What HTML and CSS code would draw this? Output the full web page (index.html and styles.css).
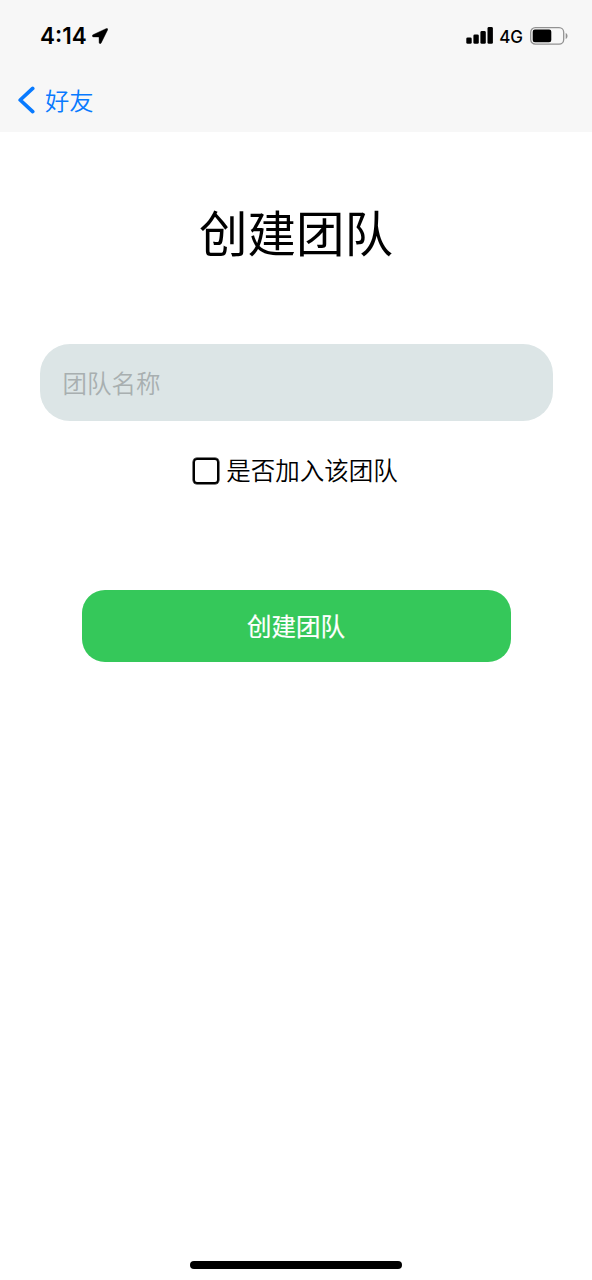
FILE: index.html
```html
<!DOCTYPE html>
<html lang="zh-CN">
<head>
<meta charset="utf-8">
<title>创建团队</title>
<link rel="stylesheet" href="styles.css">
</head>
<body>
<div class="screen">
  <header class="top">
    <div class="status">
      <div class="status-left">
        <span class="time">4:14</span>
        <svg class="location" width="16" height="16" viewBox="0 0 16 16"><path d="M14.4.5 1 6.7c-1.2.6-.8 2.2.4 2.2l5.6.1.1 5.5c0 1.3 1.6 1.6 2.1.4L15.7 1.7c.4-.8-.5-1.6-1.3-1.2z" stroke="#000" stroke-width=".4"/></svg>
      </div>
      <div class="status-right">
        <svg class="signal" width="27" height="17" viewBox="0 0 27 17"><rect x="0.3" y="10.4" width="5.4" height="6.4" rx="1.4"/><rect x="7.4" y="7.4" width="5.4" height="9.4" rx="1.4"/><rect x="14.4" y="4" width="5.4" height="12.8" rx="1.4"/><rect x="21.5" y="0.1" width="5.4" height="16.7" rx="1.4"/></svg>
        <span class="network">4G</span>
        <svg class="battery" width="38" height="18" viewBox="0 0 38 18"><rect x=".7" y=".7" width="33" height="16.4" rx="4.6" fill="none" stroke="#929292" stroke-width="1.3"/><rect x="2.7" y="2.6" width="18.6" height="12.6" rx="2.2"/><path d="M35.7 6.1c2.4 1 2.4 4.8 0 5.8z" fill="#929292"/></svg>
      </div>
    </div>
    <nav class="nav">
      <svg class="chevron" width="18" height="28" viewBox="0 0 18 28"><path d="M15.7 2.4 3.2 14l12.5 11.6" fill="none" stroke="#087aff" stroke-width="3.7" stroke-linecap="round" stroke-linejoin="round"/></svg>
      <span class="back">好友</span>
    </nav>
  </header>
  <main class="content">
    <h1 class="title">创建团队</h1>
    <input class="field" type="text" placeholder="团队名称">
    <label class="join"><span class="box"></span><span>是否加入该团队</span></label>
    <button class="submit" type="button">创建团队</button>
  </main>
  <div class="home"></div>
</div>
</body>
</html>
```
FILE: styles.css
```css
* { box-sizing: border-box; }
body {
  margin: 0;
  background: #fff;
  color: #000;
  font-family: Inter, "Noto Sans CJK SC", sans-serif;
}
.screen {
  width: 592px;
  height: 1280px;
  display: flex;
  flex-direction: column;
  overflow: hidden;
}
.top {
  height: 132px;
  background: #f7f7f7;
}
.status {
  height: 70px;
  display: flex;
  justify-content: space-between;
  padding: 0 24px 0 40px;
}
.status-left, .status-right {
  display: flex;
  align-items: center;
}
.time {
  font-size: 22.5px;
  font-weight: 600;
  line-height: 30px;
  margin-top: 1px;
}
.location { margin: 1px 0 0 5px; }
.signal { margin-top: 1px; }
.network {
  font-size: 17px;
  font-weight: 500;
  line-height: 20px;
  margin: 3px 7px 0 6px;
}
.battery { margin-top: 1px; }
.nav {
  height: 62px;
  display: flex;
  align-items: center;
  padding: 0 0 2px 17px;
}
.back {
  margin: 1px 0 0 10px;
  color: #087aff;
  font-size: 24.3px;
  font-weight: 350;
  line-height: 36px;
}
.content {
  flex: 1;
  display: flex;
  flex-direction: column;
  align-items: center;
}
.title {
  margin: 67px 0 0;
  font-size: 48.5px;
  line-height: 72px;
  font-weight: 400;
}
.field {
  width: 513px;
  height: 77px;
  margin-top: 73.4px;
  padding: 0 23px 1px;
  border: 0;
  border-radius: 30px;
  background: #dce5e6;
  font: 350 24.5px/36px "Noto Sans CJK SC", sans-serif;
}
.field::placeholder {
  color: #a8afb0;
  opacity: 1;
}
.join {
  display: flex;
  align-items: center;
  gap: 7px;
  margin-top: 31.6px;
  padding-right: 1px;
  font-size: 24.5px;
  font-weight: 350;
  line-height: 36px;
}
.box {
  width: 26px;
  height: 26px;
  border: 2px solid #000;
  border-radius: 4px;
  box-shadow: 0 0 0 0.5px #000;
}
.submit {
  width: 429px;
  height: 71.5px;
  margin-top: 101.5px;
  padding: 0;
  border: 0;
  border-radius: 23px;
  background: #35c85a;
  color: #fff;
  font: 400 24.5px/36px "Noto Sans CJK SC", sans-serif;
  -webkit-text-stroke: 0.2px #fff;
}
.home {
  align-self: center;
  width: 212px;
  height: 8px;
  margin-bottom: 11px;
  border-radius: 4px;
  background: #000;
}
```
